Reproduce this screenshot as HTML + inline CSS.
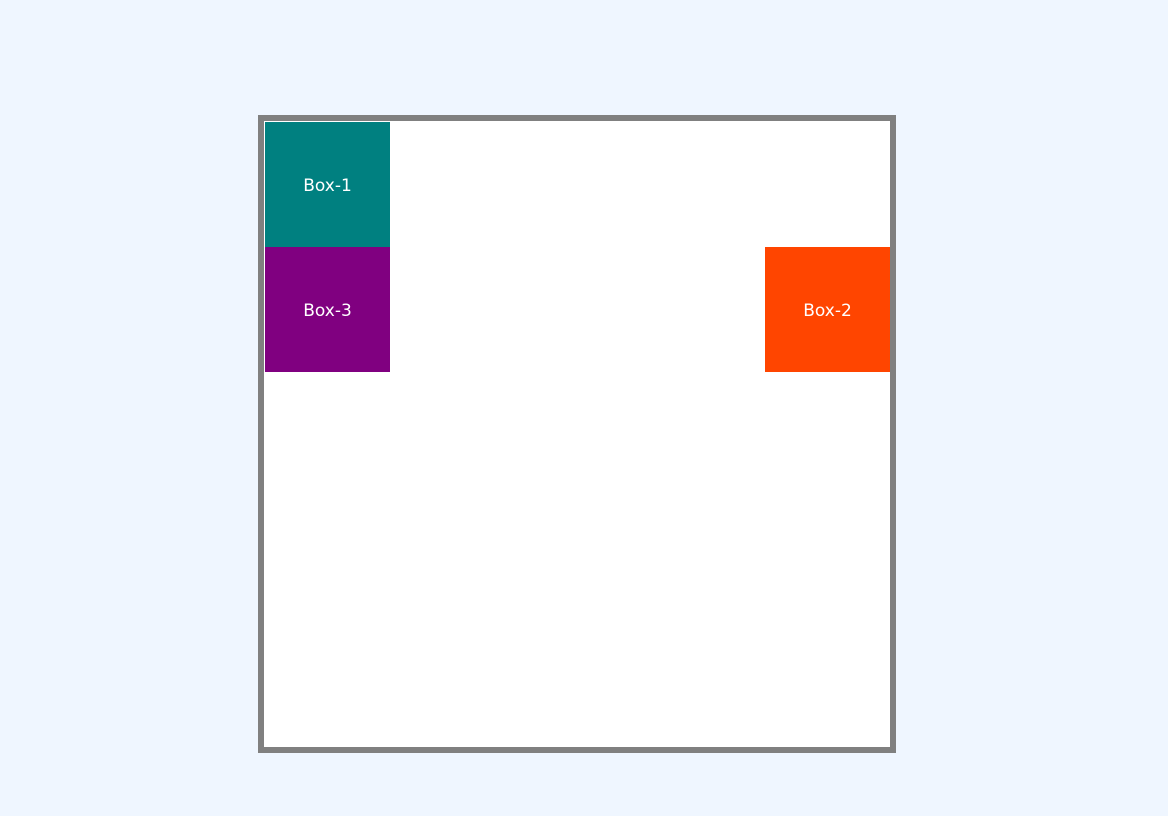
<!DOCTYPE html>
<html><head><style>
body{margin:0;background:#eff6ff;width:1168px;height:816px;position:relative;font-family:"DejaVu Sans","Liberation Sans",sans-serif;}
.c{position:absolute;left:258px;top:115px;width:626px;height:626px;border:6px solid #808080;background:#fff;}
.b{position:absolute;width:125px;height:125px;color:#fff;font-size:17px;display:flex;align-items:center;justify-content:center;}
.b span{position:relative;top:1px;}
</style></head><body>
<div class="c">
<div class="b" style="left:1px;top:1px;background:#008080"><span>Box-1</span></div>
<div class="b" style="left:1px;top:126px;background:#800080"><span>Box-3</span></div>
<div class="b" style="left:501px;top:126px;background:#ff4500"><span>Box-2</span></div>
</div>
</body></html>
